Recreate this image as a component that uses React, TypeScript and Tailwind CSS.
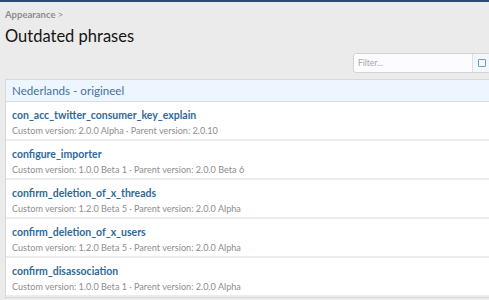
import React from "react";

const rows = [
  { name: "con_acc_twitter_consumer_key_explain", custom: "2.0.0 Alpha", parent: "2.0.10" },
  { name: "configure_importer", custom: "1.0.0 Beta 1", parent: "2.0.0 Beta 6" },
  { name: "confirm_deletion_of_x_threads", custom: "1.2.0 Beta 5", parent: "2.0.0 Alpha" },
  { name: "confirm_deletion_of_x_users", custom: "1.2.0 Beta 5", parent: "2.0.0 Alpha" },
  { name: "confirm_disassociation", custom: "1.0.0 Beta 1", parent: "2.0.0 Alpha" },
];

export default function App() {
  return (
    <div
      className="w-[489px] h-[300px] overflow-hidden bg-[#ebebeb] border-t-2 border-[#2a4b6e]"
      style={{ fontFamily: '"Segoe UI", Lato, "Noto Sans", sans-serif' }}
    >
      <div className="pl-[5px] pt-[6px] text-[9.5px] font-bold text-[#8c8c8c] leading-[14px]">
        Appearance <span className="font-normal">&gt;</span>
      </div>
      <h1 className="pl-[5px] mt-[3px] text-[16.5px] leading-[22px] text-[#141414]">Outdated phrases</h1>
      <div className="flex pl-[353px] mt-[6px]">
        <div className="flex h-[20px] border border-[#d3d3d3] rounded-[3px] bg-[#fafcff] overflow-hidden shrink-0">
          <input
            placeholder="Filter..."
            className="w-[118px] px-[4px] text-[8.5px] bg-transparent outline-none placeholder:text-[#a8a8a8]"
          />
          <div className="w-[18px] border-l border-[#dfdfdf] flex items-center justify-center bg-[#f3f6fa]">
            <div className="w-[8px] h-[8px] border border-[#6d9bc6] rounded-[1px]" />
          </div>
        </div>
      </div>
      <div className="ml-[5px] mt-[6px] border border-[#d8d8d8] border-r-0 bg-white">
        <div className="h-[22px] flex items-center px-[6px] bg-[#edf5fe] border-b border-[#d8dde4] text-[11.6px] text-[#47739e]">
          Nederlands - origineel
        </div>
        {rows.map((r) => (
          <div key={r.name} className="h-[39px] px-[6px] pt-[6px] border-b-2 border-[#ececec]">
            <div className="text-[10.5px] font-bold leading-[14px] text-[#2f6a9a]">{r.name}</div>
            <div className="text-[9.1px] leading-[13px] mt-[2px] text-[#8e8e8e]">
              Custom version: {r.custom} · Parent version: {r.parent}
            </div>
          </div>
        ))}
      </div>
    </div>
  );
}
